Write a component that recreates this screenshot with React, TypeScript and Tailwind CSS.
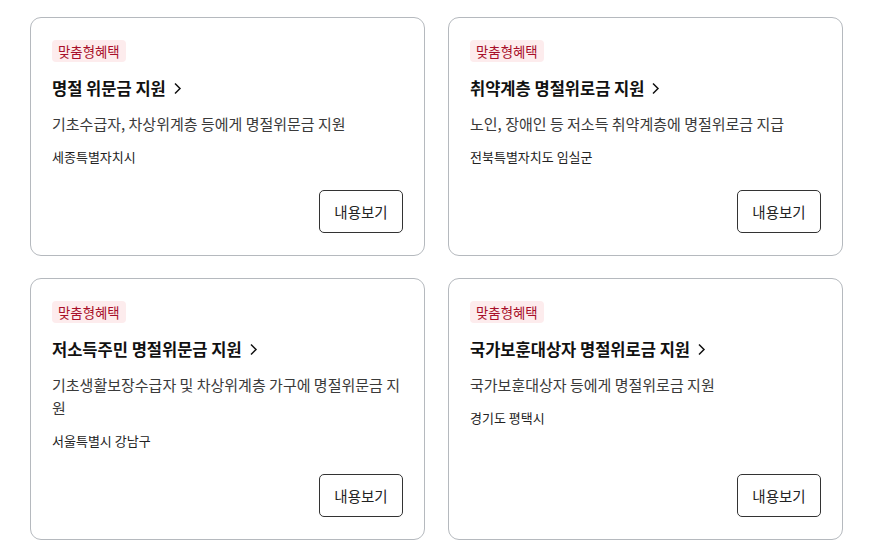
import React from 'react';

type Benefit = {
  title: string;
  desc: string;
  region: string;
};

const benefits: Benefit[] = [
  {
    title: '명절 위문금 지원',
    desc: '기초수급자, 차상위계층 등에게 명절위문금 지원',
    region: '세종특별자치시',
  },
  {
    title: '취약계층 명절위로금 지원',
    desc: '노인, 장애인 등 저소득 취약계층에 명절위로금 지급',
    region: '전북특별자치도 임실군',
  },
  {
    title: '저소득주민 명절위문금 지원',
    desc: '기초생활보장수급자 및 차상위계층 가구에 명절위문금 지원',
    region: '서울특별시 강남구',
  },
  {
    title: '국가보훈대상자 명절위로금 지원',
    desc: '국가보훈대상자 등에게 명절위로금 지원',
    region: '경기도 평택시',
  },
];

const Chevron = () => (
  <svg width="9" height="13" viewBox="0 0 9 13" fill="none" className="ml-[7px] shrink-0">
    <path d="M2 1.5L7 6.5L2 11.5" stroke="#111" strokeWidth="1.5" />
  </svg>
);

const BenefitCard: React.FC<{ item: Benefit }> = ({ item }) => (
  <div className="flex flex-col rounded-[11px] border border-[#b5b9be] bg-white px-[21px] pt-[22px] pb-[22px]">
    <div className="flex">
      <span className="h-[22px] rounded-[4px] bg-[#fdeced] px-[6px] text-[13.4px] leading-[22px] text-[#a80f2a]">
        맞춤형혜택
      </span>
    </div>
    <div className="mt-[14px] flex items-center text-[16.5px] font-bold leading-[24px] text-[#111]">
      <span>{item.title}</span>
      <Chevron />
    </div>
    <p className="mt-[12px] text-[15px] leading-[23px] text-[#3a3a3a]">{item.desc}</p>
    <p className="mt-[12px] text-[13px] leading-[20px] text-[#222]">{item.region}</p>
    <div className="mt-auto flex justify-end pt-[23px]">
      <button className="h-[43px] w-[84px] rounded-[5px] border border-[#333] bg-white text-[14.5px] text-[#222]">
        내용보기
      </button>
    </div>
  </div>
);

export default function App() {
  return (
    <div
      className="min-h-[555px] bg-white pl-[30px] pt-[17px]"
      style={{ fontFamily: '"Noto Sans CJK KR", "Noto Sans", sans-serif' }}
    >
      <div className="grid w-[813px] grid-cols-2 gap-x-[23px] gap-y-[22px]">
        {benefits.map((b) => (
          <BenefitCard key={b.title} item={b} />
        ))}
      </div>
    </div>
  );
}
